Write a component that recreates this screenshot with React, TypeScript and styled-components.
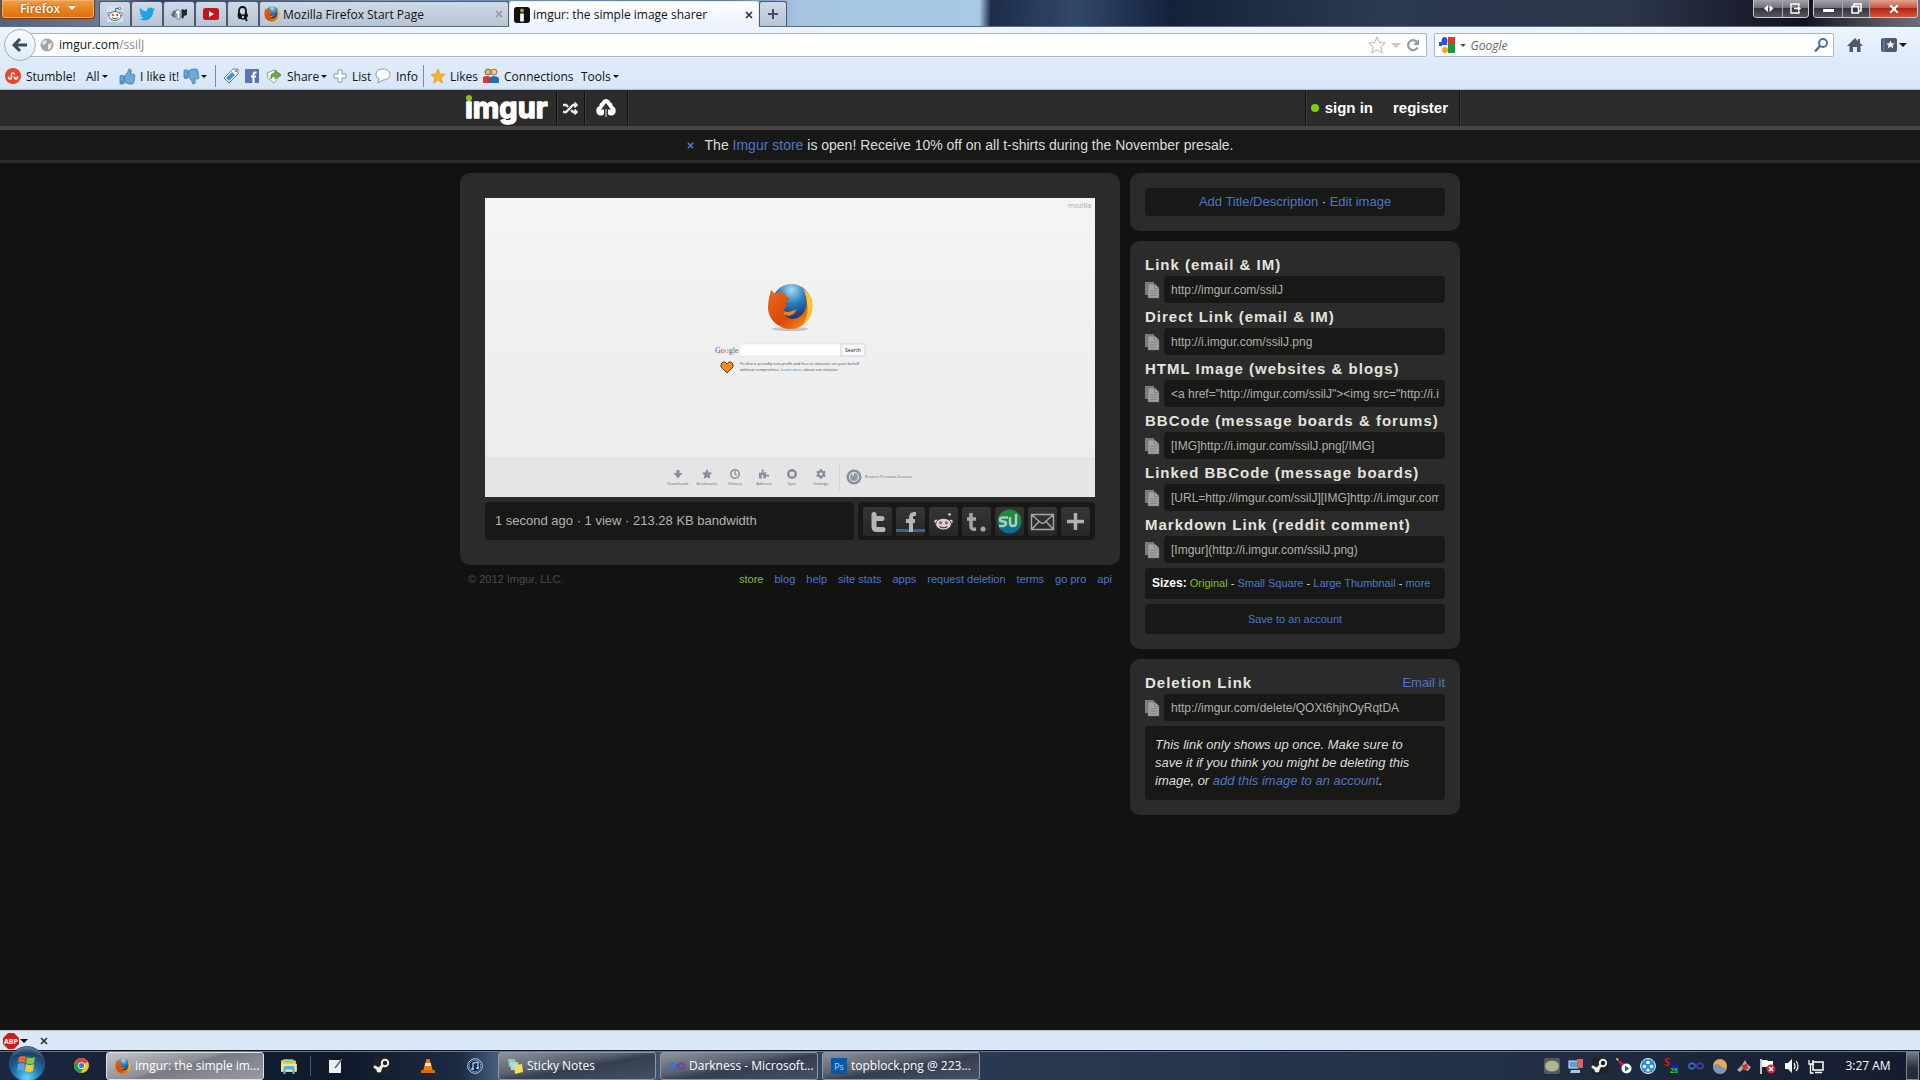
import React from "react";
import styled, { createGlobalStyle, css } from "styled-components";
import {
  FaTwitter,
  FaThumbsUp,
  FaThumbsDown,
  FaRandom,
  FaPuzzlePiece,
  FaStar,
  FaCog,
} from "react-icons/fa";

const ui = `"Open Sans", "Noto Sans", sans-serif`;
const arial = `"Liberation Sans", Arial, sans-serif`;
const color = {
  link: "#4e76c9",
  green: "#85bf25",
  panel: "#2b2b2b",
  box: "#181817",
  page: "#121211",
  text: "#dddddd",
};

const GlobalStyle = createGlobalStyle`
  *, *::before, *::after { box-sizing: border-box; }
  body { margin: 0; background: ${color.page}; overflow: hidden; }
  button, input { font: inherit; color: inherit; margin: 0; }
  button { background: none; border: 0; padding: 0; white-space: nowrap; }
  a { color: ${color.link}; text-decoration: none; }
  svg { display: block; flex: none; overflow: visible; }
`;

const Desktop = styled.div`
  display: flex;
  flex-direction: column;
  height: 100vh;
  font-family: ${ui};
  font-size: 12px;
  color: #111;
`;

/* ---------- title bar and tabs ---------- */
const TitleBar = styled.div`
  display: flex;
  align-items: flex-end;
  height: 27px;
  border-bottom: 1px solid #5b6b80;
  background: linear-gradient(
    91deg,
    #55617a 0,
    #6f7c92 6%,
    #2c3c58 8%,
    #7896b6 20%,
    #5f7ea4 38%,
    #a6c4e0 41.5%,
    #a8cae6 51%,
    #1d2d4a 51.6%,
    #31486a 56%,
    #14213b 61%,
    #2b3a52 72%,
    #2c3549 85%,
    #12121f 94%,
    #55555c 98%,
    #6d6f75 100%
  );
`;
const FirefoxButton = styled.button`
  align-self: flex-start;
  display: flex;
  align-items: center;
  justify-content: center;
  gap: 8px;
  width: 94px;
  height: 19px;
  margin: 0 4px 0 1px;
  padding-bottom: 2px;
  border: 1px solid #7b3a06;
  border-top: 0;
  border-radius: 0 0 4px 4px;
  background: linear-gradient(#f0a04b, #e8821e 50%, #dd6f0c);
  box-shadow: inset 0 0 0 1px #f5b26c;
  color: #fff;
  font-weight: 600;
  text-shadow: 0 0 2px #8a4306;
`;
const Caret = styled.span<{ $size?: number; $color?: string }>`
  border: ${(p) => p.$size ?? 3}px solid transparent;
  border-top-color: ${(p) => p.$color ?? "#111"};
  border-bottom: 0;
`;
const Tab = styled.button<{ $width: number; $active?: boolean }>`
  display: flex;
  align-items: center;
  gap: 3px;
  width: ${(p) => p.$width}px;
  height: 25px;
  padding: 0 5px 0 4px;
  border: 1px solid #4c5a70;
  border-bottom: 0;
  border-radius: 3px 3px 0 0;
  background: linear-gradient(#cfdae8, #b7c4d4);
  ${(p) =>
    p.$width < 40 &&
    css`
      justify-content: center;
    `}
  ${(p) =>
    p.$active &&
    css`
      height: 26px;
      margin-bottom: -1px;
      border-color: #e4edf7;
      background: linear-gradient(#fdfeff, #ecf3fc);
    `}
`;
const TabLabel = styled.span`
  flex: 1;
  text-align: left;
  overflow: hidden;
`;
const WindowButtons = styled.div`
  display: flex;
  align-self: flex-start;
  gap: 4px;
  margin-left: auto;
  padding-right: 2px;
`;
const ButtonGroup = styled.div`
  display: flex;
  height: 18px;
  border: 1px solid #c9ccd2;
  border-top: 0;
  border-radius: 0 0 4px 4px;
  overflow: hidden;
`;
const WindowButton = styled.button<{ $width: number; $close?: boolean }>`
  display: grid;
  place-items: center;
  width: ${(p) => p.$width}px;
  background: ${(p) =>
    p.$close
      ? "linear-gradient(#e0a292, #cb5a45 45%, #b02613 50%, #d4573a)"
      : "linear-gradient(#a3a3a9, #71727b 45%, #33343e 50%, #55565f)"};
  & + & {
    border-left: 1px solid #a7a9b0;
  }
`;

/* ---------- navigation ---------- */
const NavBar = styled.div`
  display: flex;
  align-items: center;
  height: 33px;
  padding: 3px 8px 0 4px;
  background: linear-gradient(#edf4fd, #dfebf9);
`;
const BackButton = styled.button`
  display: grid;
  place-items: center;
  width: 32px;
  height: 32px;
  margin-right: -8px;
  border: 1px solid #a3afc0;
  border-radius: 50%;
  background: linear-gradient(#fbfdff, #dfe9f5);
  z-index: 1;
`;
const Field = styled.div<{ $grow: number }>`
  display: flex;
  align-items: center;
  flex: ${(p) => p.$grow} 1 0;
  height: 24px;
  border: 1px solid #a8b7ca;
  background: #fff;
  border-radius: 2px;
`;
const AddressField = styled(Field)`
  padding: 0 6px 0 11px;
  gap: 5px;
  margin-right: 7px;
`;
const SearchField = styled(Field)`
  padding: 0 4px;
  gap: 5px;
`;
const FieldInput = styled.input<{ $italic?: boolean }>`
  flex: 1;
  min-width: 0;
  height: 20px;
  padding: 0;
  border: 0;
  outline: 0;
  background: none;
  font-style: ${(p) => (p.$italic ? "italic" : "normal")};
  &::placeholder {
    color: #666;
    opacity: 1;
  }
`;
const AddressText = styled.span`
  line-height: 20px;
  em {
    font-style: normal;
    color: #888;
  }
`;
const NavIcons = styled.div`
  display: flex;
  align-items: center;
  gap: 18px;
  width: 78px;
  padding-left: 13px;
`;
const ToolBar = styled.div`
  display: flex;
  align-items: center;
  height: 30px;
  padding: 3px 0 0 5px;
  border-bottom: 1px solid #a9bac6;
  background: linear-gradient(#dfebf9, #d8e7f7);
`;
const Tool = styled.button<{ $width: number }>`
  display: flex;
  align-items: center;
  gap: 5px;
  width: ${(p) => p.$width}px;
  ${Caret} {
    margin-left: -3px;
  }
`;
const ToolSeparator = styled.i`
  width: 1px;
  height: 22px;
  margin-right: 7px;
  background: #7f8b9b;
`;

/* ---------- imgur page ---------- */
const Page = styled.main`
  flex: 1;
  min-height: 0;
  overflow: hidden;
  background: ${color.page};
  color: ${color.text};
  font-family: ${arial};
`;
const SiteHeader = styled.header`
  border-bottom: 4px solid #444;
  background: ${color.panel};
`;
const Container = styled.div`
  display: flex;
  max-width: 1000px;
  margin: 0 auto;
`;
const HeaderCell = styled.a<{ $width: number }>`
  display: grid;
  place-items: center;
  width: ${(p) => p.$width}px;
  height: 36px;
  border-right: 1px solid #111;
  box-shadow: 1px 0 #3a3a3a;
`;
const Account = styled.nav`
  display: flex;
  align-items: center;
  gap: 20px;
  margin-left: auto;
  padding: 0 11px 1px 5px;
  border: solid #111;
  border-width: 0 1px;
  box-shadow: 1px 0 #3a3a3a, inset 1px 0 #3a3a3a;
  font-size: 15px;
  font-weight: bold;
  a {
    display: flex;
    align-items: center;
    gap: 6px;
    color: #fff;
  }
`;
const Dot = styled.i`
  width: 8px;
  height: 8px;
  border-radius: 50%;
  background: #7bd000;
`;
const Notice = styled.div`
  display: flex;
  justify-content: center;
  align-items: center;
  gap: 11px;
  height: 33px;
  border-bottom: 3px solid ${color.panel};
  background: ${color.box};
  font-size: 14px;
  button {
    color: ${color.link};
  }
`;
const Columns = styled(Container)`
  gap: 10px;
  padding-top: 10px;
  align-items: flex-start;
`;
const MainColumn = styled.section`
  flex: 1;
`;
const SideColumn = styled.aside`
  display: flex;
  flex-direction: column;
  gap: 10px;
  width: 330px;
`;
const Panel = styled.div<{ $pad: number }>`
  display: flex;
  flex-direction: column;
  gap: 5px;
  padding: ${(p) => p.$pad}px;
  border-radius: 10px;
  background: ${color.panel};
`;
const StatusRow = styled.div`
  display: flex;
  gap: 4px;
  height: 38px;
`;
const Stats = styled.div`
  flex: 1;
  padding: 0 10px;
  border-radius: 4px;
  background: ${color.box};
  line-height: 38px;
  font-size: 13px;
  color: #b4b4b0;
`;
const Share = styled.div`
  display: flex;
  align-items: center;
  gap: 4px;
  padding: 0 5px;
  border-radius: 4px;
  background: ${color.box};
`;
const ShareButton = styled.button`
  width: 29px;
  height: 29px;
  border-radius: 3px;
  background: linear-gradient(#353535, #262626);
  overflow: hidden;
`;
const Footer = styled.footer`
  display: flex;
  gap: 11px;
  padding: 6px 8px 0;
  font-size: 11px;
  line-height: 16px;
  color: #4a4a48;
  span {
    margin-right: auto;
  }
`;
const StoreLink = styled.a`
  color: ${color.green};
`;
const Box = styled.div<{ $height: number; $size: number }>`
  height: ${(p) => p.$height}px;
  border-radius: 4px;
  background: ${color.box};
  font-size: ${(p) => p.$size}px;
  line-height: ${(p) => p.$height}px;
  text-align: center;
  white-space: nowrap;
`;
const SizesBox = styled(Box)`
  padding-left: 7px;
  text-align: left;
  strong {
    font-size: 12px;
    color: #fff;
  }
`;
const CodeGroup = styled.div`
  display: grid;
  grid-template-columns: 19px 1fr;
  align-items: center;
`;
const CodeTitle = styled.div`
  grid-column: 1 / 3;
  display: flex;
  justify-content: space-between;
  padding-bottom: 2px;
  line-height: 18px;
  font-size: 13px;
  label {
    font-size: 15px;
    font-weight: bold;
    letter-spacing: 1px;
    color: #e4e4dc;
  }
`;
const CodeInput = styled.input`
  width: 100%;
  height: 27px;
  padding: 0 6px 0 7px;
  border: 0;
  border-radius: 4px;
  outline: 0;
  background: ${color.box};
  font-size: 12px;
  color: #b0b0a8;
`;
const Hint = styled.p`
  margin: 0;
  padding: 10px 24px 10px 10px;
  border-radius: 4px;
  background: ${color.box};
  font-size: 13px;
  line-height: 18px;
  font-style: italic;
`;

/* ---------- add-on bar and taskbar ---------- */
const AddonBar = styled.div`
  display: flex;
  align-items: center;
  gap: 1px;
  height: 20px;
  padding-left: 3px;
  border-top: 1px solid #b5c2d0;
  background: #dae8f7;
`;
const AddonClose = styled.button`
  margin-left: 11px;
`;
const TaskBar = styled.div`
  display: flex;
  align-items: center;
  height: 30px;
  border-top: 1px solid #10151f;
  box-shadow: inset 0 1px #6a7686;
  background: linear-gradient(
    90deg,
    #1b2740 0,
    #10192b 18%,
    #1c2b42 24%,
    #46607c 26%,
    #2a3a52 50%,
    #26364e 60%,
    #223048 78%,
    #1c283d 86%,
    #151c2c 100%
  );
  color: #fff;
`;
const StartButton = styled.button`
  position: relative;
  z-index: 1;
  display: grid;
  place-items: center;
  width: 36px;
  height: 36px;
  margin: 0 17px 4px 9px;
  border-radius: 50%;
  border: 1px solid #31597c;
  background: radial-gradient(circle at 50% 90%, #5fd8ff, #1b73ad 40%, #1e4166 70%, #8fb3cc);
`;
const Pinned = styled.button<{ $width: number }>`
  display: grid;
  place-items: center;
  width: ${(p) => p.$width}px;
  height: 28px;
`;
const TaskButton = styled.button<{ $active?: boolean }>`
  display: flex;
  align-items: center;
  gap: 4px;
  width: 158px;
  height: 28px;
  margin-right: 4px;
  margin-left: ${(p) => (p.$active ? 6 : 0)}px;
  padding: 0 7px 0 8px;
  border: 1px solid ${(p) => (p.$active ? "#e0e0e4" : "#8d96a4")};
  border-radius: 3px;
  background: ${(p) =>
    p.$active
      ? "linear-gradient(165deg, #c4c4c8, #8e9096 45%, #777a84 50%, #9b9da5)"
      : "linear-gradient(170deg, #8f949c, #5a6270 40%, #343e4f 55%, #465264)"};
`;
const TaskDivider = styled.i`
  width: 1px;
  height: 20px;
  background: #4c586a;
`;
const Tray = styled.div`
  display: flex;
  gap: 8px;
  margin-left: auto;
`;
const Clock = styled.time`
  width: 82px;
  padding-left: 6px;
  text-align: center;
`;
const ShowDesktop = styled.button`
  width: 13px;
  height: 28px;
  margin-right: 1px;
  border: 1px solid #7d8794;
  background: linear-gradient(#6d7683, #262d3a 60%);
`;

/* ---------- drawings ---------- */
const Glyph = ({ size = 16, box = 16, children }: { size?: number; box?: number; children: React.ReactNode }) => (
  <svg width={size} height={size} viewBox={`0 0 ${box} ${box}`} aria-hidden="true">
    {children}
  </svg>
);

const FirefoxShapes = () => (
  <>
    <defs>
      <radialGradient id="globe" cx=".5" cy=".15" r=".85">
        <stop offset="0" stopColor="#a8dcf5" />
        <stop offset=".4" stopColor="#2d7fc0" />
        <stop offset="1" stopColor="#0a2258" />
      </radialGradient>
      <linearGradient id="fox" x1="0" y1="0" x2="1" y2="1">
        <stop offset="0" stopColor="#e8681a" />
        <stop offset=".55" stopColor="#d9480a" />
        <stop offset="1" stopColor="#f7a31c" />
      </linearGradient>
    </defs>
    <circle cx="25" cy="21" r="20" fill="url(#globe)" />
    <path d="M38 7c7 5 9 12 8 19-1 12-11 21-22 21S1 38 1 25c0-7 2-12 3-18l4 4c3-2 7-2 10-1l1 3 4 3c0 2-5 3-5 5l3 2c-3 2-5 5-3 9 3 5 9 6 14 3 7-4 9-11 8-18 0-4-1-7-2-10z" fill="url(#fox)" />
    <path d="M37 6c8 5 10 13 9 20-1 7-4 12-9 16 4-6 5-13 4-20 0-6-2-12-4-16z" fill="#fbc531" />
    <path d="M17 28c4 4 8 0 13-1-2 6-8 8-13 5z" fill="#f08022" />
  </>
);
const Firefox = ({ size = 16 }: { size?: number }) => (
  <Glyph size={size} box={48}>
    <FirefoxShapes />
  </Glyph>
);
const RedditHead = () => (
  <>
    <path d="M8 6l1-4 3 1" fill="none" stroke="#333" strokeWidth=".8" />
    <circle cx="12.6" cy="2.6" r="1.3" fill="#fff" stroke="#333" strokeWidth=".6" />
    <circle cx="2.4" cy="8" r="1.7" fill="#fff" stroke="#333" strokeWidth=".6" />
    <circle cx="13.6" cy="8" r="1.7" fill="#fff" stroke="#333" strokeWidth=".6" />
    <ellipse cx="8" cy="10" rx="6" ry="4.4" fill="#fff" stroke="#333" strokeWidth=".7" />
    <circle cx="5.8" cy="9" r="1.2" fill="#f04a28" />
    <circle cx="10.2" cy="9" r="1.2" fill="#f04a28" />
    <path d="M5 11.8q3 2 6 0" fill="none" stroke="#333" strokeWidth=".8" />
  </>
);
const Cross = ({ c = "#333", size = 8 }: { c?: string; size?: number }) => (
  <Glyph size={size} box={8}>
    <path d="M1 1l6 6M7 1L1 7" stroke={c} strokeWidth="1.7" />
  </Glyph>
);
const Documents = () => (
  <svg width="14" height="16" viewBox="0 0 14 16" aria-hidden="true">
    <path d="M0 0h9v13H0z" fill="#7f7f7f" />
    <path d="M3 2h7l4 4v10H3z" fill="#a2a2a2" stroke="#666" strokeWidth=".5" />
    <path d="M5 8.500h7M5 11h7M5 13.500h7M9.500 2v4.500H14" stroke="#7c7c7c" fill="none" strokeWidth=".8" />
  </svg>
);
const Steam = () => (
  <Glyph>
    <rect width="16" height="16" rx="2" fill="#222" />
    <circle cx="11" cy="5" r="3.200" fill="none" stroke="#eee" strokeWidth="2" />
    <path d="M8 8l-3 4M1 9l4 2.500" stroke="#eee" strokeWidth="3" strokeLinecap="round" />
    <circle cx="5" cy="12" r="2.500" fill="#eee" />
  </Glyph>
);
const Infinity = ({ a = "#3a6fd0", b = "#6b3fa8" }: { a?: string; b?: string }) => (
  <Glyph>
    <path d="M8 8C5 4 1 5 1 8s4 4 7 0" fill="none" stroke={a} strokeWidth="2" />
    <path d="M8 8c3-4 7-3 7 0s-4 4-7 0" fill="none" stroke={b} strokeWidth="2" />
  </Glyph>
);

const ImgurLogo = () => (
  <svg width="86" height="36" viewBox="0 0 86 36" role="img" aria-label="imgur">
    <text x="0" y="28" fontFamily="Inter, sans-serif" fontSize="29" fontWeight="700" fill="#fff" stroke="#fff" strokeWidth="1.400" strokeLinejoin="round">
      imgur
    </text>
    <rect x="-1" y="0" width="11" height="10" fill={color.panel} />
    <circle cx="4" cy="8" r="3" fill={color.green} />
  </svg>
);
const Cloud = () => (
  <svg width="22" height="20" viewBox="0 0 22 20" aria-hidden="true">
    <path d="M9 16q-1 2-4 1.500a5 5 0 0 1-.5-9.500Q4 5 6.500 4.500 8 1 11 1t4.500 3.500Q18 5 17.500 8A5 5 0 0 1 17 17.500q-3 .5-4-1.500z" fill="#fff" />
    <path d="M11 5l5 6.500h-3V20H9v-8.500H6z" fill="#333" />
    <path d="M10 11h2v8h-2z" fill="#8a8a8a" />
  </svg>
);

const thumbActions = [
  { x: 193, label: "Downloads", Icon: null, path: "M-1.500-4h3v3h3L0 4.500-4.500-1h3z" },
  { x: 222, label: "Bookmarks", Icon: FaStar },
  { x: 250, label: "History", Icon: null, path: "M-5 0a5 5 0 1 0 10 0a5 5 0 1 0-10 0M-3.500 0a3.500 3.500 0 1 1 7 0a3.500 3.500 0 1 1-7 0M-.6-3v3.500l2 1.500.8-1L.6 0v-3z" },
  { x: 279, label: "Add-ons", Icon: FaPuzzlePiece },
  { x: 307, label: "Sync", Icon: null, path: "M-5 0a5 5 0 1 0 10 0a5 5 0 1 0-10 0M-2.500 0a2.500 2.500 0 1 1 5 0a2.500 2.500 0 1 1-5 0" },
  { x: 336, label: "Settings", Icon: FaCog },
];
const Thumb = styled.svg`
  width: 100%;
  height: auto;
  font-family: ${ui};
`;
const UploadedImage = () => (
  <Thumb viewBox="0 0 610 299" role="img" aria-label="Firefox start page">
    <defs>
      <linearGradient id="paper" x1="0" y1="0" x2="0" y2="1">
        <stop offset="0" stopColor="#f4f4f4" />
        <stop offset="1" stopColor="#ebebeb" />
      </linearGradient>
    </defs>
    <rect width="610" height="299" fill="url(#paper)" />
    <rect y="260" width="610" height="39" fill="#e5e5e5" />
    <rect y="260" width="610" height="1" fill="#dedede" />
    <text x="583" y="10" fontSize="7" fill="#a8a8ac">mozilla</text>
    <ellipse cx="305" cy="131" rx="18" ry="2" fill="#c4c4c4" />
    <svg x="282" y="85" width="47" height="47" viewBox="0 0 48 48">
      <FirefoxShapes />
    </svg>
    <text x="230" y="155" fontSize="8" fontFamily="Liberation Serif, serif">
      <tspan fill="#2a5bd7">G</tspan><tspan fill="#d8372a">o</tspan><tspan fill="#e0a800">o</tspan><tspan fill="#2a5bd7">g</tspan><tspan fill="#2f9e44">l</tspan><tspan fill="#d8372a">e</tspan>
    </text>
    <rect x="255" y="146" width="101" height="12" fill="#fff" stroke="#ddd" strokeWidth=".6" />
    <rect x="356" y="146" width="24" height="12" fill="#f8f8fa" stroke="#c4d0de" strokeWidth=".8" />
    <text x="368" y="154" fontSize="5" textAnchor="middle" fill="#222">Search</text>
    <path d="M242 175l-6-6v-3l2-2h2l2 2 2-2h2l2 2v3z" fill="#f58a1f" stroke="#5a3310" strokeWidth=".9" />
    <text x="255" y="167" fontSize="4" fill="#444">Firefox is proudly non-profit and free to innovate on your behalf</text>
    <text x="255" y="173" fontSize="4" fill="#444">without compromise. <tspan fill="#2a6fd6">Learn more</tspan> about our mission</text>
    {thumbActions.map(({ x, label, Icon, path }) => (
      <g key={label} fill="#858f9d">
        {Icon ? (
          <Icon x={x - 5} y={271} size={10} color="#858f9d" />
        ) : (
          <path d={path} transform={`translate(${x} 276)`} fillRule="evenodd" />
        )}
        <text x={x} y="287" fontSize="4" textAnchor="middle" fill="#666">{label}</text>
      </g>
    ))}
    <rect x="354" y="266" width="1" height="26" fill="#d2d2d2" />
    <circle cx="369" cy="279" r="7.500" fill="#858f9d" />
    <circle cx="369" cy="279" r="4.500" fill="#8d97a5" stroke="#e5e5e5" strokeWidth="1.200" />
    <path d="M366 276l3-1v3z" fill="#e5e5e5" />
    <text x="380" y="280" fontSize="4" fill="#666">Restore Previous Session</text>
  </Thumb>
);

const shareIcons = [
  { name: "Twitter", art: <path d="M11 7.500v12q0 3 3 3h6M11 11.500h8" fill="none" stroke="#b5b5b5" strokeWidth="5" strokeLinecap="round" /> },
  { name: "Facebook", art: <><rect y="22" width="29" height="3" fill="#3f5f9a" /><path d="M20 7h-2q-3 0-3 4v14M10 14h9" fill="none" stroke="#b5b5b5" strokeWidth="4" /></> },
  { name: "Reddit", art: <svg x="3" y="4" width="23" height="21" viewBox="0 0 16 16" opacity=".8"><RedditHead /></svg> },
  { name: "Tumblr", art: <><path d="M9 6v13q0 4 5 3M5 12h9" fill="none" stroke="#a5a5a5" strokeWidth="3.500" /><circle cx="21" cy="22" r="2.600" fill="#a5a5a5" /></> },
  { name: "StumbleUpon", art: <><defs><linearGradient id="su" x1="0" y1="0" x2="0" y2="1"><stop offset=".3" stopColor="#1e8a3c" /><stop offset=".9" stopColor="#0b6aa0" /></linearGradient></defs><circle cx="14.500" cy="14.500" r="12" fill="url(#su)" /><path d="M13 10.500H8q-3 0-3 2t3 2 3 2-3 2.500H4M15 10v6q0 3 3 3t3-3V7" fill="none" stroke="#a9cdbb" strokeWidth="2.500" /></> },
  { name: "Email", art: <path d="M3.500 7.500h22v15h-22zl9 8q2 1.500 4 0l9-8M3.500 22.500l7.500-8M25.500 22.500l-7.500-8" fill="none" stroke="#a8a8a8" strokeWidth="1.400" /> },
  { name: "More", art: <path d="M14.500 6v17M6 14.500h17" stroke="#b0b0b0" strokeWidth="3.500" /> },
];

const codes = [
  ["Link (email & IM)", "http://imgur.com/ssilJ"],
  ["Direct Link (email & IM)", "http://i.imgur.com/ssilJ.png"],
  ["HTML Image (websites & blogs)", '<a href="http://imgur.com/ssilJ"><img src="http://i.imgur.com/ssilJ.png" alt="" /></a>'],
  ["BBCode (message boards & forums)", "[IMG]http://i.imgur.com/ssilJ.png[/IMG]"],
  ["Linked BBCode (message boards)", "[URL=http://imgur.com/ssilJ][IMG]http://i.imgur.com/ssilJ.png[/IMG][/URL]"],
  ["Markdown Link (reddit comment)", "[Imgur](http://i.imgur.com/ssilJ.png)"],
];
const CodeField = ({ id, title, value, action }: { id: string; title: string; value: string; action?: React.ReactNode }) => (
  <CodeGroup>
    <CodeTitle>
      <label htmlFor={id}>{title}</label>
      {action}
    </CodeTitle>
    <Documents />
    <CodeInput id={id} defaultValue={value} readOnly />
  </CodeGroup>
);

const footerLinks = ["blog", "help", "site stats", "apps", "request deletion", "terms", "go pro", "api"];

const trayIcons = [
  <Glyph><rect width="16" height="16" rx="2" fill="#555c58" /><ellipse cx="8" cy="8" rx="7" ry="5.500" fill="#b4b394" /></Glyph>,
  <Glyph><rect x="1" y="3" width="9" height="7" fill="#5f9be0" stroke="#d7e7f7" /><rect x="9" y="1" width="6" height="9" fill="#d9635a" /><path d="M3 12h9v3H2z" fill="#a9c7ea" /></Glyph>,
  <Steam />,
  <Glyph><path d="M0 0l10 7-3 4z" fill="#c2185b" /><path d="M0 0l3 1-2 2z" fill="#ffe600" /><circle cx="10.500" cy="10.500" r="5" fill="#fff" /><path d="M9 7.500v6l4-3z" fill="#0a7a1e" /></Glyph>,
  <Glyph><circle cx="8" cy="8" r="7.500" fill="#2a8fd0" stroke="#dff0fa" /><g fill="#fff"><circle cx="8" cy="4.500" r="1.800" /><circle cx="4.500" cy="8.500" r="1.800" /><circle cx="11.500" cy="8.500" r="1.800" /><circle cx="8" cy="12" r="1.500" /></g></Glyph>,
  <Glyph><path d="M7 6l8 2-6 5z" fill="#1a1ad0" /><text x="0" y="8" fontSize="10" fontWeight="bold" fill="#e01010">S</text><text x="6" y="15" fontSize="7" fontWeight="bold" fill="#20d020">28</text></Glyph>,
  <Infinity a="#2e6bb8" b="#3a3fa0" />,
  <Glyph><circle cx="8" cy="8" r="7" fill="#e9a94a" /><path d="M1 8q4-4 8 0t6 2A7 7 0 0 1 1 8z" fill="#7f93b5" /></Glyph>,
  <Glyph><path d="M1 12l5-5 3-5 2 4 4 3-3 4-5-2-3 3z" fill="#b9a7a2" /><path d="M6 7l5-1 1 5-5 1z" fill="#c0392b" /></Glyph>,
  <Glyph><path d="M1 1v15" stroke="#fff" strokeWidth="1.500" /><path d="M2 2h5l1 1h5v6H2z" fill="#fff" /><circle cx="11" cy="11" r="4.500" fill="#d0222e" /><path d="M9 9l4 4M13 9l-4 4" stroke="#fff" strokeWidth="1.500" /></Glyph>,
  <Glyph><path d="M1 5h3l4-4v14l-4-4H1z" fill="#fff" /><path d="M10 5q2 3 0 6M12 3q4 5 0 10" fill="none" stroke="#fff" strokeWidth="1.200" /></Glyph>,
  <Glyph><rect x="5" y="4" width="10" height="8" fill="none" stroke="#fff" strokeWidth="1.500" /><path d="M7 14.500h7M2.500 6v9h3M1 2v4h4V2" fill="none" stroke="#fff" strokeWidth="1.300" /></Glyph>,
];

export default function App() {
  return (
    <Desktop>
      <GlobalStyle />
      <TitleBar>
        <FirefoxButton>Firefox <Caret $size={4} $color="#fff" /></FirefoxButton>
        <Tab $width={32} aria-label="reddit"><Glyph><rect width="16" height="16" fill="#cfe3f7" /><RedditHead /></Glyph></Tab>
        <Tab $width={32} aria-label="Twitter"><FaTwitter size={16} color="#1ba5e6" /></Tab>
        <Tab $width={32} aria-label="Forum">
          <Glyph><path d="M0 9l2-4 2-1 1 2-1 2 1 4-3-1z" fill="#66717f" /><path d="M6 3l5 4H9v6H6V8H4z" fill="#fff" stroke="#667" strokeWidth=".8" /><path d="M10 4l2-1 1 1 3-1v6l-3 1-1 3-2-2 1-4z" fill="#1b2b45" /></Glyph>
        </Tab>
        <Tab $width={32} aria-label="YouTube"><Glyph><rect y="2" width="16" height="12" rx="2.500" fill="#c2161c" /><path d="M6 5v6l5-3z" fill="#fff" /></Glyph></Tab>
        <Tab $width={32} aria-label="Music">
          <Glyph><path d="M4 9V5q0-4 3.500-4T11 5v3" fill="none" stroke="#111" strokeWidth="1.800" /><path d="M3 7h3v6H4q-2-2-1-6zM10 6q3 1 3 4l-2 3-2-1z" fill="#111" /><circle cx="8" cy="11" r="2" fill="none" stroke="#111" strokeWidth="1.500" /><path d="M10 12l2 3" stroke="#111" strokeWidth="2" /></Glyph>
        </Tab>
        <Tab $width={250}><Firefox /><TabLabel>Mozilla Firefox Start Page</TabLabel><Cross c="#9099a6" /></Tab>
        <Tab $width={250} $active>
          <Glyph><rect width="16" height="16" rx="3" fill="#111" /><circle cx="8" cy="3.500" r="2" fill="#85bf25" /><rect x="6.200" y="6.500" width="3.600" height="8" fill="#fff" /></Glyph>
          <TabLabel>imgur: the simple image sharer</TabLabel><Cross />
        </Tab>
        <Tab $width={28} aria-label="New tab"><Glyph size={10} box={10}><path d="M5 0v10M0 5h10" stroke="#444f5e" strokeWidth="2" /></Glyph></Tab>
        <WindowButtons>
          <ButtonGroup>
            <WindowButton $width={28} aria-label="Move"><Glyph size={11} box={11}><path d="M5 2v7L1 5.500zM6.500 2v7l4-3.500z" fill="#fff" /></Glyph></WindowButton>
            <WindowButton $width={26} aria-label="Send"><Glyph size={11} box={11}><path d="M9 3V1H1v9h8V8M4 5.500h6M8 3.500l2 2-2 2" fill="none" stroke="#fff" strokeWidth="1.400" /></Glyph></WindowButton>
          </ButtonGroup>
          <ButtonGroup>
            <WindowButton $width={28} aria-label="Minimize"><Glyph size={11} box={11}><rect y="6" width="11" height="3" fill="#fff" /></Glyph></WindowButton>
            <WindowButton $width={27} aria-label="Restore"><Glyph size={11} box={11}><path d="M3 3V1h7v7H8M1 3.500h6.500V10H1z" fill="none" stroke="#fff" strokeWidth="1.600" /></Glyph></WindowButton>
            <WindowButton $width={48} $close aria-label="Close"><Cross c="#fff" size={10} /></WindowButton>
          </ButtonGroup>
        </WindowButtons>
      </TitleBar>

      <NavBar>
        <BackButton aria-label="Back"><Glyph><path d="M15 8H2M8 2L2 8l6 6" fill="none" stroke="#3d4a5c" strokeWidth="3" /></Glyph></BackButton>
        <AddressField $grow={1378}>
          <Glyph size={14} box={14}><circle cx="7" cy="7" r="6.500" fill="#a3a3a3" /><path d="M3 3l3-1 1 2-3 3-2-1zM8 6l4-1-1 5-3 2z" fill="#e8e8e8" /></Glyph>
          <AddressText>imgur.com<em>/ssilJ</em></AddressText>
          <FieldInput aria-label="Address" />
          <Glyph size={18} box={18}><path d="M9 1l2.300 5.500 6 .5-4.500 4 1.400 6L9 13.800 3.800 17l1.400-6L.700 7l6-.5z" fill="#fff" stroke="#b3b3b3" /></Glyph>
          <Caret $size={5} $color="#c9c9c9" />
          <Glyph size={14} box={14}><path d="M11 4a5 5 0 1 0 .5 5.500" fill="none" stroke="#8f9cab" strokeWidth="2.200" /><path d="M13 1v6H7z" fill="#8f9cab" /></Glyph>
        </AddressField>
        <SearchField $grow={390}>
          <Glyph><rect width="16" height="16" fill="#fff" /><path d="M9 0h7v6H9z" fill="#e32" /><path d="M9 6h7v10H9z" fill="#129a3f" /><path d="M0 5h7l2 4H0z" fill="#2a55c8" /><ellipse cx="5.500" cy="4" rx="3" ry="4" fill="#2a55c8" /><circle cx="6" cy="13" r="3" fill="#f2a81d" /><path d="M3 8h6v2H3z" fill="#fff" /></Glyph>
          <Caret $color="#555" />
          <FieldInput $italic placeholder="Google" aria-label="Search" />
          <Glyph><circle cx="10" cy="6" r="4" fill="none" stroke="#4672a3" strokeWidth="2" /><path d="M7 9l-5 5.500" stroke="#4672a3" strokeWidth="2.500" /></Glyph>
        </SearchField>
        <NavIcons>
          <Glyph><path d="M8 1L0 9h2.500v6H6v-5h4v5h3.500V9H16L13 6V2h-2v2z" fill="#4b5a6e" /></Glyph>
          <Tool $width={29} aria-label="Bookmarks"><Glyph><rect x="0" y="1" width="16" height="14" rx="2" fill="#4b5a6e" /><path d="M3 1v14" stroke="#8390a2" /><path d="M9.500 3.500l1.300 3h3l-2.400 2 1 3-2.900-1.900-2.900 1.900 1-3-2.400-2h3z" fill="#fff" /></Glyph><Caret $size={4} /></Tool>
        </NavIcons>
      </NavBar>

      <ToolBar>
        <Tool $width={81}><Glyph><circle cx="8" cy="8" r="8" fill="#e8452c" /><path d="M3.500 8.500v1q0 1.500 1.500 1.500t1.500-1.500V6.500Q6.500 5 8 5t1.500 1.500M12.500 8v1.500q0 1.500-1.500 1.500T9.500 9.500V8.500" fill="none" stroke="#fff" strokeWidth="1.500" /></Glyph>Stumble!</Tool>
        <Tool $width={34}>All <Caret /></Tool>
        <Tool $width={64}><FaThumbsUp size={15} color="#6ea8d8" stroke="#2d6a9f" strokeWidth={24} />I like it!</Tool>
        <Tool $width={31} aria-label="Dislike"><FaThumbsDown size={15} color="#6ea8d8" stroke="#2d6a9f" strokeWidth={24} /><Caret /></Tool>
        <ToolSeparator />
        <Tool $width={22} aria-label="Tag"><Glyph><path d="M10 1h5v5l-9 9-5-5z" fill="#f3f8fd" stroke="#6080a5" /><path d="M9 4l3 3-6 6-3-3z" fill="#3f94de" /><circle cx="13" cy="3" r="1.200" fill="#e07a30" /></Glyph></Tool>
        <Tool $width={21} aria-label="Facebook"><Glyph size={14} box={14}><rect width="14" height="14" fill="#5a76b0" /><path d="M11.500 3.500H10q-1.500 0-1.500 2V14M6 7.500h5" fill="none" stroke="#fff" strokeWidth="2" /></Glyph></Tool>
        <Tool $width={67}><Glyph><path d="M1 5l7-3 7 5-7 8-6-5z" fill="#f4f4ee" stroke="#9aa5a0" /><path d="M5 11q-1-6 4-6V2l6 5-6 4V8Q6 8 5 11z" fill="#6aa84f" stroke="#3f7a2c" strokeWidth=".6" /></Glyph>Share<Caret /></Tool>
        <Tool $width={42}><Glyph size={14} box={14}><path d="M5 1h4v4h4v4H9v4H5V9H1V5h4z" fill="#fff" stroke="#8a96a5" /></Glyph>List</Tool>
        <Tool $width={48}><Glyph><path d="M8 1c4 0 7 2 7 5.500S12 12 8 12l-5 3 1-4C2 10 1 8 1 6.500 1 3 4 1 8 1z" fill="#fff" stroke="#8d98a7" /></Glyph>Info</Tool>
        <ToolSeparator />
        <Tool $width={52}><Glyph size={14} box={14}><path d="M7 0l2 5 5 .5-4 3.500 1.500 5L7 11l-4.500 3L4 9 0 5.500 5 5z" fill="#f9b522" stroke="#d68a10" strokeWidth=".6" /></Glyph>Likes</Tool>
        <Tool $width={98}><Glyph><circle cx="5" cy="4" r="3" fill="#e9b07a" stroke="#8b5a2b" /><circle cx="11" cy="4" r="3" fill="#f1c391" stroke="#a8743a" /><path d="M0 15V9q4-2 7 0v6z" fill="#d8362a" /><path d="M6 15V10q5-4 10 0v5z" fill="#2f67b5" /></Glyph>Connections</Tool>
        <Tool $width={40}>Tools<Caret /></Tool>
      </ToolBar>

      <Page>
        <SiteHeader>
          <Container>
            <HeaderCell href="#" $width={97}><ImgurLogo /></HeaderCell>
            <HeaderCell href="#" $width={28} aria-label="Random"><FaRandom size={15} color="#e8e8e8" /></HeaderCell>
            <HeaderCell href="#" $width={43} aria-label="Upload"><Cloud /></HeaderCell>
            <Account>
              <a href="#"><Dot />sign in</a>
              <a href="#">register</a>
            </Account>
          </Container>
        </SiteHeader>
        <Notice>
          <button aria-label="Dismiss"><Cross c={color.link} size={7} /></button>
          <span>The <a href="#">Imgur store</a> is open! Receive 10% off on all t-shirts during the November presale.</span>
        </Notice>
        <Columns>
          <MainColumn>
            <Panel $pad={25}>
              <UploadedImage />
              <StatusRow>
                <Stats>1 second ago · 1 view · 213.28 KB bandwidth</Stats>
                <Share>
                  {shareIcons.map((s) => (
                    <ShareButton key={s.name} aria-label={s.name}><Glyph size={29} box={29}>{s.art}</Glyph></ShareButton>
                  ))}
                </Share>
              </StatusRow>
            </Panel>
            <Footer>
              <span>© 2012 Imgur, LLC.</span>
              <StoreLink href="#">store</StoreLink>
              {footerLinks.map((l) => <a href="#" key={l}>{l}</a>)}
            </Footer>
          </MainColumn>
          <SideColumn>
            <Panel $pad={15}>
              <Box $height={28} $size={13}><a href="#">Add Title/Description</a> · <a href="#">Edit image</a></Box>
            </Panel>
            <Panel $pad={15}>
              {codes.map(([title, value], i) => <CodeField key={title} id={`code-${i}`} title={title} value={value} />)}
              <SizesBox $height={31} $size={11}>
                <strong>Sizes:</strong> <StoreLink href="#">Original</StoreLink> - <a href="#">Small Square</a> - <a href="#">Large Thumbnail</a> - <a href="#">more</a>
              </SizesBox>
              <Box $height={30} $size={11}><a href="#">Save to an account</a></Box>
            </Panel>
            <Panel $pad={15}>
              <CodeField id="deletion" title="Deletion Link" value="http://imgur.com/delete/QOXt6hjhOyRqtDA" action={<a href="#">Email it</a>} />
              <Hint>This link only shows up once. Make sure to save it if you think you might be deleting this image, or <a href="#">add this image to an account</a>.</Hint>
            </Panel>
          </SideColumn>
        </Columns>
      </Page>

      <AddonBar>
        <Glyph><path d="M5 0h6l5 5v6l-5 5H5l-5-5V5z" fill="#c8201a" /><text x="8" y="11" fontSize="7" fontWeight="bold" textAnchor="middle" fill="#fff">ABP</text></Glyph>
        <Caret $size={4} />
        <AddonClose aria-label="Close add-on bar"><Cross /></AddonClose>
      </AddonBar>
      <TaskBar>
        <StartButton aria-label="Start">
          <Glyph size={22} box={22}><path d="M3 4q4-2 7 0L9 10q-4-2-7 0z" fill="#f0642c" /><path d="M11 4q4 2 8 0l-1 6q-4 2-8 0z" fill="#8cc63f" /><path d="M2 11q4-2 7 0l-1 7q-3-2-7 0z" fill="#4ea6e8" /><path d="M10 11q4 2 8 0l-1 7q-4 2-8 0z" fill="#fcc72b" /></Glyph>
        </StartButton>
        <Pinned $width={38} aria-label="Chrome"><Glyph size={15} box={16}><circle cx="8" cy="8" r="8" fill="#f5c518" /><path d="M8 8L1 4a8 8 0 0 1 14 0z" fill="#db4437" /><path d="M8 8L1 4a8 8 0 0 0 6 12l4-7z" fill="#1fa045" /><circle cx="8" cy="8" r="3.600" fill="#fff" /><circle cx="8" cy="8" r="2.800" fill="#3b7de0" /></Glyph></Pinned>
        <TaskButton $active><Firefox />imgur: the simple im...</TaskButton>
        <Pinned $width={42} aria-label="Explorer"><Glyph size={18}><path d="M1 3l5-1 1 1h7v10H1z" fill="#f2d675" /><path d="M3 2h9v4H3z" fill="#9ed27a" /><path d="M1 6h14v7H1z" fill="#f7e49a" /><path d="M3 15V10q0-2 2-2h6q2 0 2 2v5h-2v-4H5v4z" fill="#4fb0e6" /></Glyph></Pinned>
        <TaskDivider />
        <Pinned $width={47} aria-label="Notes"><Glyph><rect x="2" y="2" width="12" height="13" fill="#eceff2" /><path d="M15 1L8 10" stroke="#666" strokeWidth="1.600" /></Glyph></Pinned>
        <Pinned $width={47} aria-label="Steam"><Steam /></Pinned>
        <Pinned $width={46} aria-label="VLC"><Glyph><path d="M6.500 1h3L13 13H3z" fill="#f07c14" /><path d="M5.500 5h5l.8 3H4.700z" fill="#f4f4f4" /><path d="M1 12h14v3H1z" fill="#e0680c" /></Glyph></Pinned>
        <Pinned $width={47} aria-label="iTunes"><Glyph><circle cx="8" cy="8" r="7.300" fill="#16283f" stroke="#b9d4ea" /><circle cx="8" cy="8" r="5.800" fill="none" stroke="#4f93c9" /><path d="M6 11V5l5-1v6" fill="none" stroke="#9fd0f4" strokeWidth="1.300" /><circle cx="5.500" cy="11" r="1.300" fill="#9fd0f4" /><circle cx="10.500" cy="10" r="1.300" fill="#9fd0f4" /></Glyph></Pinned>
        <TaskButton><Glyph><path d="M1 1h7l1 7-7 1z" fill="#8ed0a0" /><path d="M3 4h8v8H4z" fill="#a8d8f0" /><path d="M7 7l8-1 1 8-8 2z" fill="#f5dc5e" /></Glyph>Sticky Notes</TaskButton>
        <TaskButton><Infinity />Darkness - Microsoft...</TaskButton>
        <TaskButton><Glyph><rect width="16" height="16" fill="#0a57a8" /><text x="8" y="12" fontSize="9" textAnchor="middle" fill="#b8defa">Ps</text></Glyph>topblock.png @ 223...</TaskButton>
        <Tray>{trayIcons.map((icon, i) => <React.Fragment key={i}>{icon}</React.Fragment>)}</Tray>
        <Clock>3:27 AM</Clock>
        <ShowDesktop aria-label="Show desktop" />
      </TaskBar>
    </Desktop>
  );
}
